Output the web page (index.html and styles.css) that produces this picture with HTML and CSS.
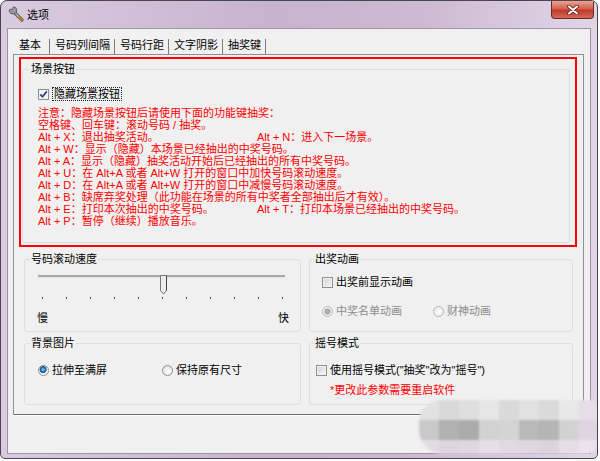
FILE: index.html
```html
<!DOCTYPE html>
<html lang="zh-CN">
<head>
  <meta charset="UTF-8" />
  <title>选项</title>
  <link rel="stylesheet" href="styles.css">
</head>
<body>

  <div class="window">
    <div class="titlebar">
      <svg class="app-icon" width="16" height="16" viewBox="0 0 16 16">
        <path d="M6.5 6.5 L14 14" stroke="#5a5a5a" stroke-width="3.2" stroke-linecap="round"/>
        <path d="M6.5 6.5 L14 14" stroke="#b8b8b8" stroke-width="1.4" stroke-linecap="round"/>
        <path d="M11.5 11.5 L14 14" stroke="#c07a28" stroke-width="2.4" stroke-linecap="round"/>
        <path d="M1.5 3.5 A3.6 3.6 0 1 0 5.5 0.8 L4.6 3.6 L2.8 3.2 Z" fill="#9a9a9a" stroke="#4c4c4c" stroke-width="0.8"/>
      </svg>
      <span class="title">选项</span>
      <div class="close-btn">
        <svg width="12" height="10" viewBox="0 0 12 10">
          <path d="M2 1.5 L10 8.5 M10 1.5 L2 8.5" stroke="#5a1c18" stroke-width="3.6" stroke-linecap="round"/>
          <path d="M2 1.5 L10 8.5 M10 1.5 L2 8.5" stroke="#ffffff" stroke-width="2" stroke-linecap="round"/>
        </svg>
      </div>
    </div>

    <div class="client">
      <div class="tabs">
        <span class="tab selected">基本</span>
        <span class="tab">号码列间隔</span>
        <span class="tab">号码行距</span>
        <span class="tab">文字阴影</span>
        <span class="tab">抽奖键</span>
      </div>

      <div class="pane">
        <div class="highlight">
          <fieldset class="group scene">
            <legend>场景按钮</legend>
            <div class="check-row">
              <span class="box checked">
                <svg width="9" height="9" viewBox="0 0 9 9"><path d="M1.3 4.4 L3.5 6.8 L7.8 1.4" fill="none" stroke="#2c3f7c" stroke-width="1.7"/></svg>
              </span>
              <span class="focus">隐藏场景按钮</span>
            </div>
            <div class="notes">
              <div>注意：隐藏场景按钮后请使用下面的功能键抽奖：</div>
              <div>空格键、回车键：滚动号码 / 抽奖。</div>
              <div><span class="col">Alt + X：退出抽奖活动。</span>Alt + N：进入下一场景。</div>
              <div>Alt + W：显示（隐藏）本场景已经抽出的中奖号码。</div>
              <div>Alt + A：显示（隐藏）抽奖活动开始后已经抽出的所有中奖号码。</div>
              <div>Alt + U：在 Alt+A 或者 Alt+W 打开的窗口中加快号码滚动速度。</div>
              <div>Alt + D：在 Alt+A 或者 Alt+W 打开的窗口中减慢号码滚动速度。</div>
              <div>Alt + B：缺席弃奖处理（此功能在场景的所有中奖者全部抽出后才有效）。</div>
              <div><span class="col">Alt + E：打印本次抽出的中奖号码。</span>Alt + T：打印本场景已经抽出的中奖号码。</div>
              <div>Alt + P：暂停（继续）播放音乐。</div>
            </div>
          </fieldset>
        </div>

        <div class="row first">
          <fieldset class="group speed">
            <legend>号码滚动速度</legend>
            <div class="slider">
              <div class="track"></div>
              <svg class="thumb" width="8" height="20" viewBox="0 0 8 20">
                <path d="M0.5 0.5 H6.5 V15.5 L3.5 19 L0.5 15.5 Z" fill="#ececec" stroke="#777"/>
                <path d="M6.5 0.5 V15.5" stroke="#444"/>
              </svg>
            </div>
            <div class="ticks">
              <i></i><i></i><i></i><i></i><i></i><i></i><i></i><i></i><i></i><i></i><i></i>
            </div>
            <div class="ends"><span>慢</span><span>快</span></div>
          </fieldset>

          <fieldset class="group anim">
            <legend>出奖动画</legend>
            <div class="check-row">
              <span class="box"></span>
              <span>出奖前显示动画</span>
            </div>
            <div class="radio-row disabled">
              <span class="option"><span class="radio on"></span>中奖名单动画</span>
              <span class="option second"><span class="radio"></span>财神动画</span>
            </div>
          </fieldset>
        </div>

        <div class="row">
          <fieldset class="group background">
            <legend>背景图片</legend>
            <div class="radio-row">
              <span class="option"><span class="radio on"></span>拉伸至满屏</span>
              <span class="option second"><span class="radio"></span>保持原有尺寸</span>
            </div>
          </fieldset>

          <fieldset class="group shake">
            <legend>摇号模式</legend>
            <div class="check-row">
              <span class="box"></span>
              <span>使用摇号模式("抽奖"改为"摇号")</span>
            </div>
            <div class="warning">*更改此参数需要重启软件</div>
          </fieldset>
        </div>
      </div>
    </div>

    <div class="mosaic">
      <i style="background:#e2e2e2"></i><i style="background:#d9d9d9"></i><i style="background:#dedede"></i><i style="background:#e6e6e6"></i><i style="background:#d9d9d9"></i><i style="background:#e1e1e1"></i><i style="background:#dadada"></i><i style="background:#e8e8e8"></i><i style="background:#e6dde8"></i>
      <i style="background:#c9c9c9"></i><i style="background:#b1b1b1"></i><i style="background:#ababab"></i><i style="background:#d2d2d2"></i><i style="background:#d4d4d4"></i><i style="background:#b9b9b9"></i><i style="background:#b5b5b5"></i><i style="background:#d2d2d2"></i><i style="background:#e0d4e2"></i>
      <i style="background:#e4dbe6"></i><i style="background:#ded4e0"></i><i style="background:#e0d6e2"></i><i style="background:#e6dde8"></i><i style="background:#e2d8e4"></i><i style="background:#e0d6e2"></i><i style="background:#ddd3df"></i><i style="background:#e6dde8"></i><i style="background:#eae2ec"></i>
    </div>
  </div>

</body>
</html>
```

FILE: styles.css
```css
* {
  box-sizing: border-box;
}

html, body {
  margin: 0;
  background: #ffffff;
}

body {
  font-family: "Liberation Sans", "Noto Sans CJK SC", sans-serif;
  font-size: 11px;
  color: #000;
}

.window {
  position: relative;
  width: 598px;
  height: 459px;
  border: 1px solid #4a4450;
  border-radius: 7px 7px 5px 5px;
  padding: 0 6px 4px 6px;
  background: linear-gradient(to right, #d8cbe0, #c8b3ce 45%, #cdb9d2 70%, #e0d5e6);
  overflow: hidden;
}

/* title bar */
.titlebar {
  height: 27px;
  display: flex;
  align-items: flex-start;
}

.app-icon {
  margin: 5px 0 0 1px;
}

.title {
  margin: 8px 0 0 3px;
  font-size: 11px;
  line-height: 12px;
}

.close-btn {
  margin: 0 -3px 0 auto;
  width: 43px;
  height: 18px;
  border: 1px solid #6e2a26;
  border-top: none;
  border-radius: 0 0 4px 4px;
  background: linear-gradient(to bottom, #e9a392, #d4614c 45%, #c0392b 55%, #d86a55);
  display: flex;
  align-items: center;
  justify-content: center;
}

/* client area */
.client {
  height: 426px;
  border: 1px solid #9e93a5;
  background: #f0f0f0;
}

.tabs {
  height: 25px;
  display: flex;
  align-items: flex-end;
}

.tab {
  height: 15px;
  line-height: 13px;
  padding: 0 4px 0 5px;
  border-right: 1px solid #7d7d7d;
}

.tab.selected {
  padding: 0 8px 0 11px;
}

.pane {
  height: 361px;
  margin: 0 6px 0 5px;
  border: 1px solid #8e9096;
  border-bottom-color: #6f6f6f;
  box-shadow: 0 1px 0 #ffffff;
  background: #f0f0f0;
}

.highlight {
  width: 558px;
  height: 190px;
  margin: 2px 0 0 5px;
  border: 2px solid #ff0000;
}

/* group boxes */
.group {
  margin: 0;
  border: 1px solid #d5dfe5;
  border-radius: 3px;
  padding: 0;
  min-width: 0;
}

.group legend {
  padding: 0 1px;
  line-height: 12px;
  color: #000;
}

.scene {
  width: 548px;
  height: 180px;
  margin: 4px 0 0 1px;
  padding-left: 7px;
}

.check-row {
  display: flex;
  align-items: center;
  height: 14px;
  line-height: 12px;
}

.scene .check-row {
  margin: 12px 0 0 8px;
}

.focus {
  margin-left: 1px;
  padding: 0 1px;
  outline: 1px dotted #222;
}

.box {
  width: 11px;
  height: 11px;
  margin-right: 3px;
  border: 1px solid #8e8f8f;
  background: linear-gradient(135deg, #cfd3d8, #f6f6f6);
  box-shadow: inset 0 0 0 1px #f2f2f2;
  display: flex;
  align-items: center;
  justify-content: center;
  flex: none;
}

.box.checked {
  background: #f4f4f4;
}

.radio {
  display: inline-block;
  width: 11px;
  height: 11px;
  margin-right: 3px;
  border: 1px solid #8e8f8f;
  border-radius: 50%;
  background: radial-gradient(circle at 60% 60%, #ffffff, #d3d7dc);
  vertical-align: -1px;
  flex: none;
}

.radio.on {
  background: radial-gradient(circle at 45% 40%, #a8dcf8 0, #3a8ed0 1.6px, #1a4f8c 3.2px, #e8eaec 3.8px, #fafafa 5px);
}

.disabled {
  color: #8d8d8d;
}

.disabled .radio {
  border-color: #b5b5b5;
  background: radial-gradient(circle at 60% 60%, #fbfbfb, #e6e6e6);
}

.disabled .radio.on {
  background: radial-gradient(circle, #b8b8b8 0, #a0a0a0 2.6px, #eeeeee 3.4px, #fbfbfb 5px);
}

.notes {
  margin: 6px 0 0 8px;
  color: #ff0000;
  line-height: 12px;
  white-space: nowrap;
}

.col {
  display: inline-block;
  width: 219px;
}

/* lower rows */
.row {
  display: flex;
  gap: 8px;
  margin: 5px 0 0 10px;
}

.row.first {
  margin-top: 6px;
}

.speed, .background {
  width: 277px;
  padding-left: 5px;
}

.anim, .shake {
  width: 264px;
  padding-left: 4px;
}

.row.first .group {
  height: 79px;
}

.row .group {
  height: 68px;
}

.slider {
  position: relative;
  width: 247px;
  height: 20px;
  margin: 10px 0 0 8px;
}

.track {
  margin-top: 7px;
  height: 3px;
  border-top: 2px solid #a8a8a8;
  border-bottom: 1px solid #e4e4e4;
}

.thumb {
  position: absolute;
  left: 122px;
  top: 0;
}

.ticks {
  width: 241px;
  height: 2px;
  margin: 2px 0 0 12px;
  display: flex;
  justify-content: space-between;
}

.ticks i {
  width: 1px;
  height: 2px;
  background: #4a4a4a;
}

.ends {
  width: 252px;
  margin: 13px 0 0 7px;
  display: flex;
  justify-content: space-between;
  line-height: 12px;
}

.anim .check-row {
  margin: 10px 0 0 8px;
}

.radio-row {
  display: flex;
  align-items: center;
  height: 14px;
  line-height: 12px;
}

.option {
  display: flex;
  align-items: center;
}

.anim .radio-row {
  margin: 15px 0 0 8px;
}

.anim .option.second {
  margin-left: 31px;
}

.background .radio-row {
  margin: 14px 0 0 8px;
}

.background .option.second {
  margin-left: 55px;
}

.shake .check-row {
  margin: 14px 0 0 2px;
}

.warning {
  margin: 7px 0 0 16px;
  color: #ff0000;
  line-height: 12px;
}

/* pixelated watermark over the bottom-right corner */
.mosaic {
  position: absolute;
  left: 418px;
  top: 399px;
  width: 180px;
  height: 54px;
  display: grid;
  grid-template-columns: repeat(9, 20px);
  grid-template-rows: 20px 20px 14px;
  filter: blur(0.8px);
  border-radius: 22px 8px 14px 24px;
  overflow: hidden;
}
```
